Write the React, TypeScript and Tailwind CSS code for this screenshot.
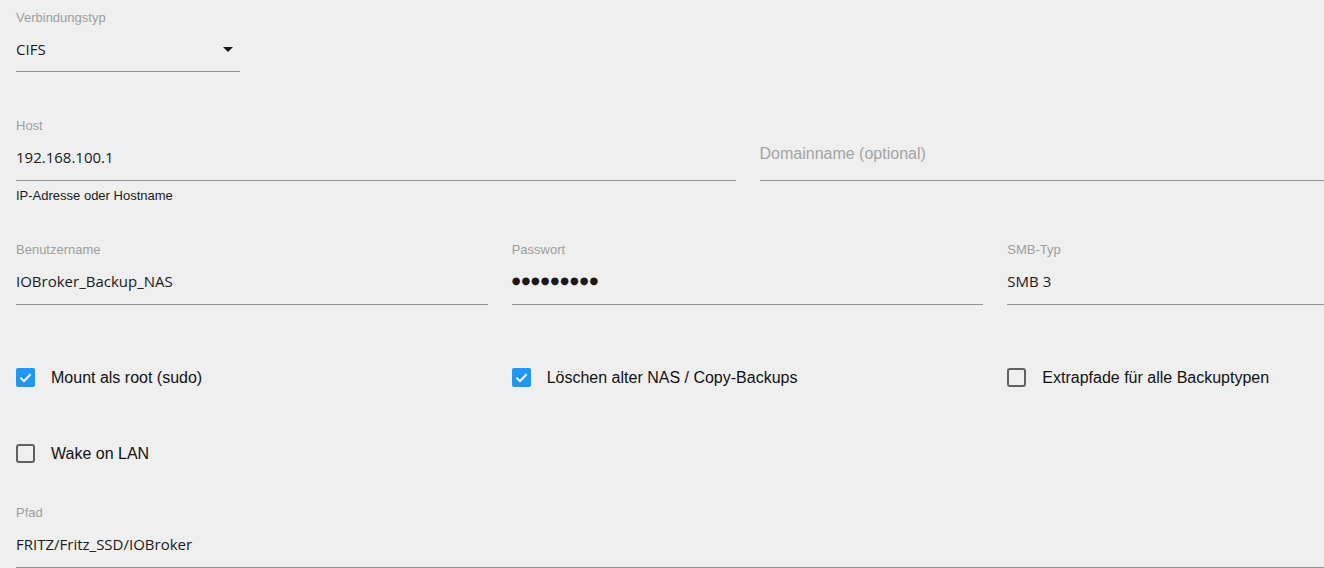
import React from 'react'

const labelCls = "h-[16px] leading-[16px] text-[13px] text-[#9e9e9e] font-['Liberation_Sans',Arial,sans-serif]"
const valueCls = "h-[24px] leading-[24px] text-[15px] text-[#1a1a1a] font-['Open_Sans','Noto_Sans',sans-serif] whitespace-nowrap"

function Field({ label, value, className = '' }: { label: string; value: string; className?: string }) {
  return (
    <div className={'flex flex-col ' + className}>
      <div className={labelCls}>{label}</div>
      <div className="mt-[11px] pb-[11px] border-b border-[#949494]">
        <div className={valueCls}>{value}</div>
      </div>
    </div>
  )
}

function Check({ checked, label, className = '' }: { checked: boolean; label: string; className?: string }) {
  return (
    <div className={'flex items-center gap-4 h-[24px] ' + className}>
      <svg width="19" height="19" viewBox="0 0 19 19" className="shrink-0 -mt-[1px]">
        {checked ? (
          <>
            <rect x="0" y="0" width="19" height="19" rx="2" fill="#2196f3" />
            <path d="M4.5 9.8 L8 13.2 L14.6 6.2" stroke="#fff" strokeWidth="2" fill="none" />
          </>
        ) : (
          <rect x="1" y="1" width="17" height="17" rx="2" stroke="#616161" strokeWidth="2" fill="none" />
        )}
      </svg>
      <span className="text-[16px] leading-[24px] text-[#111] font-['Liberation_Sans',Arial,sans-serif] whitespace-nowrap">{label}</span>
    </div>
  )
}

export default function App() {
  return (
    <div className="h-[568px] w-full overflow-hidden bg-[#efefef]">
      <div className="ml-4 w-[1463px]">
        {/* Verbindungstyp */}
        <div className="pt-[10px] grid grid-cols-6 gap-x-6">
          <div className="flex flex-col">
            <div className={labelCls}>Verbindungstyp</div>
            <div className="mt-[11px] pb-[10px] border-b border-[#949494] flex items-center justify-between">
              <div className={valueCls}>CIFS</div>
              <svg width="24" height="24" viewBox="0 0 24 24" className="mt-[-1px]">
                <path d="M7 10l5 5 5-5z" fill="#1a1a1a" />
              </svg>
            </div>
          </div>
        </div>

        {/* Host / Domain */}
        <div className="mt-[46px] grid grid-cols-6 gap-x-6">
          <div className="col-span-3 flex flex-col">
            <Field label="Host" value="192.168.100.1" />
            <div className="mt-[7px] h-[16px] leading-[16px] text-[13px] text-[#1a1a1a] font-['Liberation_Sans',Arial,sans-serif]">
              IP-Adresse oder Hostname
            </div>
          </div>
          <div className="col-span-3 flex flex-col">
            <div className="h-[16px]" />
            <div className="mt-[8px] pb-[14px] border-b border-[#949494]">
              <div className="h-[24px] leading-[24px] text-[16px] text-[#a3a3a3] font-['Liberation_Sans',Arial,sans-serif]">
                Domainname (optional)
              </div>
            </div>
          </div>
        </div>

        {/* Benutzer / Passwort / SMB */}
        <div className="mt-[38px] grid grid-cols-6 gap-x-6">
          <Field className="col-span-2" label="Benutzername" value="IOBroker_Backup_NAS" />
          <div className="col-span-2 flex flex-col">
            <div className={labelCls}>Passwort</div>
            <div className="mt-[11px] pb-[11px] border-b border-[#949494]">
              <div className="h-[24px] leading-[24px] text-[10px] tracking-[1px] text-[#1a1a1a] font-['DejaVu_Sans',sans-serif]">
                ●●●●●●●●●
              </div>
            </div>
          </div>
          <Field className="col-span-2" label="SMB-Typ" value="SMB 3" />
        </div>

        {/* Checkboxes */}
        <div className="mt-[61px] grid grid-cols-6 gap-x-6">
          <Check className="col-span-2" checked label="Mount als root (sudo)" />
          <Check className="col-span-2" checked label="Löschen alter NAS / Copy-Backups" />
          <Check className="col-span-2" checked={false} label="Extrapfade für alle Backuptypen" />
        </div>

        <div className="mt-[52px] grid grid-cols-6 gap-x-6">
          <Check className="col-span-2" checked={false} label="Wake on LAN" />
        </div>

        {/* Pfad */}
        <div className="mt-[39px]">
          <Field label="Pfad" value="FRITZ/Fritz_SSD/IOBroker" />
        </div>
      </div>
    </div>
  )
}
